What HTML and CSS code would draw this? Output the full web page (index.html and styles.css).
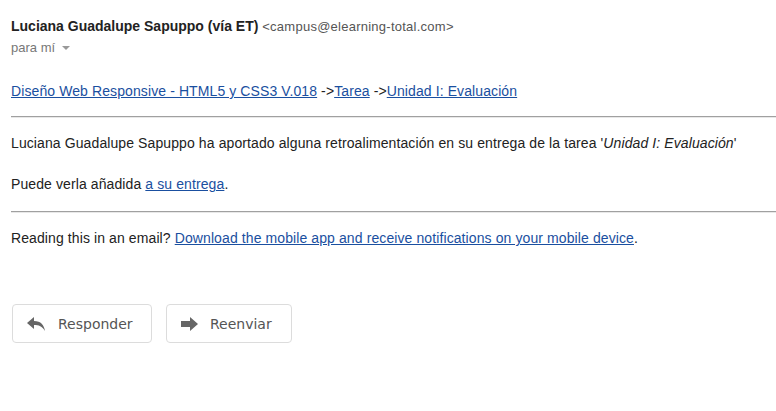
FILE: index.html
```html
<!DOCTYPE html>
<html lang="es">
<head>
<meta charset="utf-8">
<title>Correo</title>
<link rel="stylesheet" href="styles.css">
</head>
<body>
<div class="mail">
  <div class="header">
    <div class="from"><span class="name">Luciana Guadalupe Sapuppo (vía ET)</span> <span class="addr">&lt;campus@elearning-total.com&gt;</span></div>
    <div class="to">para mí <span class="caret"></span></div>
  </div>
  <div class="body">
    <div class="crumbs"><a href="#">Diseño Web Responsive - HTML5 y CSS3 V.018</a> -&gt;<a href="#">Tarea</a> -&gt;<a href="#">Unidad I: Evaluación</a></div>
    <hr class="rule">
    <p class="para">Luciana Guadalupe Sapuppo ha aportado alguna retroalimentación en su entrega de la tarea '<i>Unidad I: Evaluación</i>'</p>
    <p class="para second">Puede verla añadida <a href="#">a su entrega</a>.</p>
    <hr class="rule lower">
    <p class="para">Reading this in an email? <a href="#">Download the mobile app and receive notifications on your mobile device</a>.</p>
  </div>
  <div class="actions">
    <button class="btn reply">
      <svg class="ico" width="20" height="16" viewBox="0 0 20 16"><path d="M7 1 L0 7 L7 13 L7 9 C12 9 15 10 18 15 C17 9 14 5 7 5 Z" fill="#666"/></svg>
      <span>Responder</span>
    </button>
    <button class="btn fwd">
      <svg class="ico" width="18" height="14" viewBox="0 0 18 14"><path d="M0 4 H9 V0 L17 7 L9 14 V10 H0 Z" fill="#666"/></svg>
      <span>Reenviar</span>
    </button>
  </div>
</div>
</body>
</html>
```
FILE: styles.css
```css
html, body {
  margin: 0;
  padding: 0;
  background: #fff;
}
body {
  font-family: Arial, "Liberation Sans", sans-serif;
  color: #222;
}
.mail {
  padding: 17px 0 0 11px;
}
.from {
  font-size: 14px;
  line-height: 18px;
}
.name {
  font-weight: bold;
  color: #222;
}
.addr {
  font-size: 13px;
  letter-spacing: 0.25px;
  color: #555;
}
.to {
  margin-top: 4px;
  font-size: 13px;
  line-height: 16px;
  color: #777;
  display: flex;
  align-items: center;
  gap: 7px;
}
.caret {
  width: 0;
  height: 0;
  border-left: 4px solid transparent;
  border-right: 4px solid transparent;
  border-top: 4px solid #999;
}
.body {
  margin-top: 27px;
  font-size: 14px;
  line-height: 17px;
  letter-spacing: 0.1px;
  color: #222;
}
a {
  color: #1a4fa0;
  text-decoration: underline;
}
.rule {
  border: 0;
  border-top: 1px solid #a0a0a0;
  border-bottom: 1px solid #e8e8e8;
  margin: 16px 0 0;
  height: 0;
}
.rule.lower {
  margin-top: 18px;
}
.para {
  margin: 0;
  padding-top: 17px;
}
.para.second {
  padding-top: 24px;
}
.actions {
  margin-top: 57px;
  margin-left: 1px;
  display: flex;
  gap: 14px;
}
.btn {
  display: flex;
  align-items: center;
  height: 39px;
  padding: 0 14px;
  background: #fff;
  border: 1px solid #dcdcdc;
  border-radius: 4px;
  font-family: "DejaVu Sans", Verdana, sans-serif;
  font-size: 14px;
  color: #555;
  gap: 11px;
}
.btn.reply {
  width: 140px;
}
.btn.fwd {
  width: 126px;
}
```
